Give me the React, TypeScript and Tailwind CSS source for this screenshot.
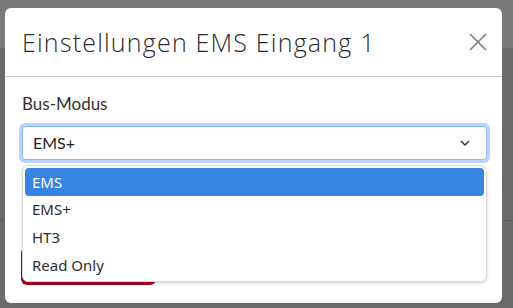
import React from 'react';

const options = ['EMS', 'EMS+', 'HT3', 'Read Only'];

const CloseIcon = () => (
  <svg width="18" height="18" viewBox="0 0 18 18" fill="none" stroke="#7a7a7a" strokeWidth="1.6">
    <path d="M1 1 L17 17 M17 1 L1 17" />
  </svg>
);

const Chevron = () => (
  <svg width="12" height="8" viewBox="0 0 12 8" fill="none" stroke="#333" strokeWidth="1.5">
    <path d="M2 2 L6 6 L10 2" />
  </svg>
);

const App = (): JSX.Element => {
  return (
    <div className="relative w-[513px] h-[308px] overflow-hidden bg-[#6a6a6a]">
      {/* dimmed page behind the modal */}
      <div className="flex flex-col h-full">
        <div className="h-[48px] bg-[#7a7a7a]" />
        <div className="h-[173px] border-b border-[#5c5c5c]" />
      </div>

      {/* modal */}
      <div className="absolute left-[5px] top-[8px] w-[497px] h-[295px] bg-white rounded-[6px] flex flex-col">
        <div className="h-[69px] flex items-center justify-between pl-[17px] pr-[15px] border-b border-[#cdcdcd]">
          <h2
            className="text-[25px] text-[#2b2b2b] tracking-[1.2px] pt-[1px]"
            style={{ fontFamily: '"Open Sans", "Noto Sans", sans-serif', fontWeight: 300 }}
          >
            Einstellungen EMS Eingang 1
          </h2>
          <button className="w-[18px] h-[18px] flex items-center justify-center">
            <CloseIcon />
          </button>
        </div>

        <div className="flex flex-col pl-[14px] pr-[12px] pt-[17px]" style={{ fontFamily: 'Lato, "Noto Sans", sans-serif' }}>
          <label className="text-[17px] leading-[20px] text-[#333] mb-[9px] ml-[3px]">Bus-Modus</label>
          <div className="rounded-[6px] p-[3px] bg-[#bad5fb]">
            <div className="h-[34px] bg-white rounded-[4px] border border-[#8db8f3] flex items-center justify-between pl-[10px] pr-[15px]">
              <span className="text-[16px] text-[#222]">EMS+</span>
              <Chevron />
            </div>
          </div>
          <div className="mt-[84px] w-[135px] h-[38px] ml-[2px] rounded-[6px] bg-[#a8001e]" />
        </div>
      </div>

      {/* open select list */}
      <div
        className="absolute left-[22px] top-[165px] w-[465px] h-[117px] bg-white rounded-[6px] border border-[#dadada] shadow-[0_1px_3px_rgba(0,0,0,0.2)] p-[2px] flex flex-col"
        style={{ fontFamily: '"Noto Sans", sans-serif' }}
      >
        {options.map((o, i) => (
          <div
            key={o}
            className={
              i === 0
                ? 'h-[28px] flex items-center pl-[7px] rounded-[4px] bg-[#3584e4] text-white text-[15px]'
                : 'h-[28px] flex items-center pl-[7px] text-[#2e2e2e] text-[15px]'
            }
          >
            {o}
          </div>
        ))}
      </div>
    </div>
  );
};

export default App;
